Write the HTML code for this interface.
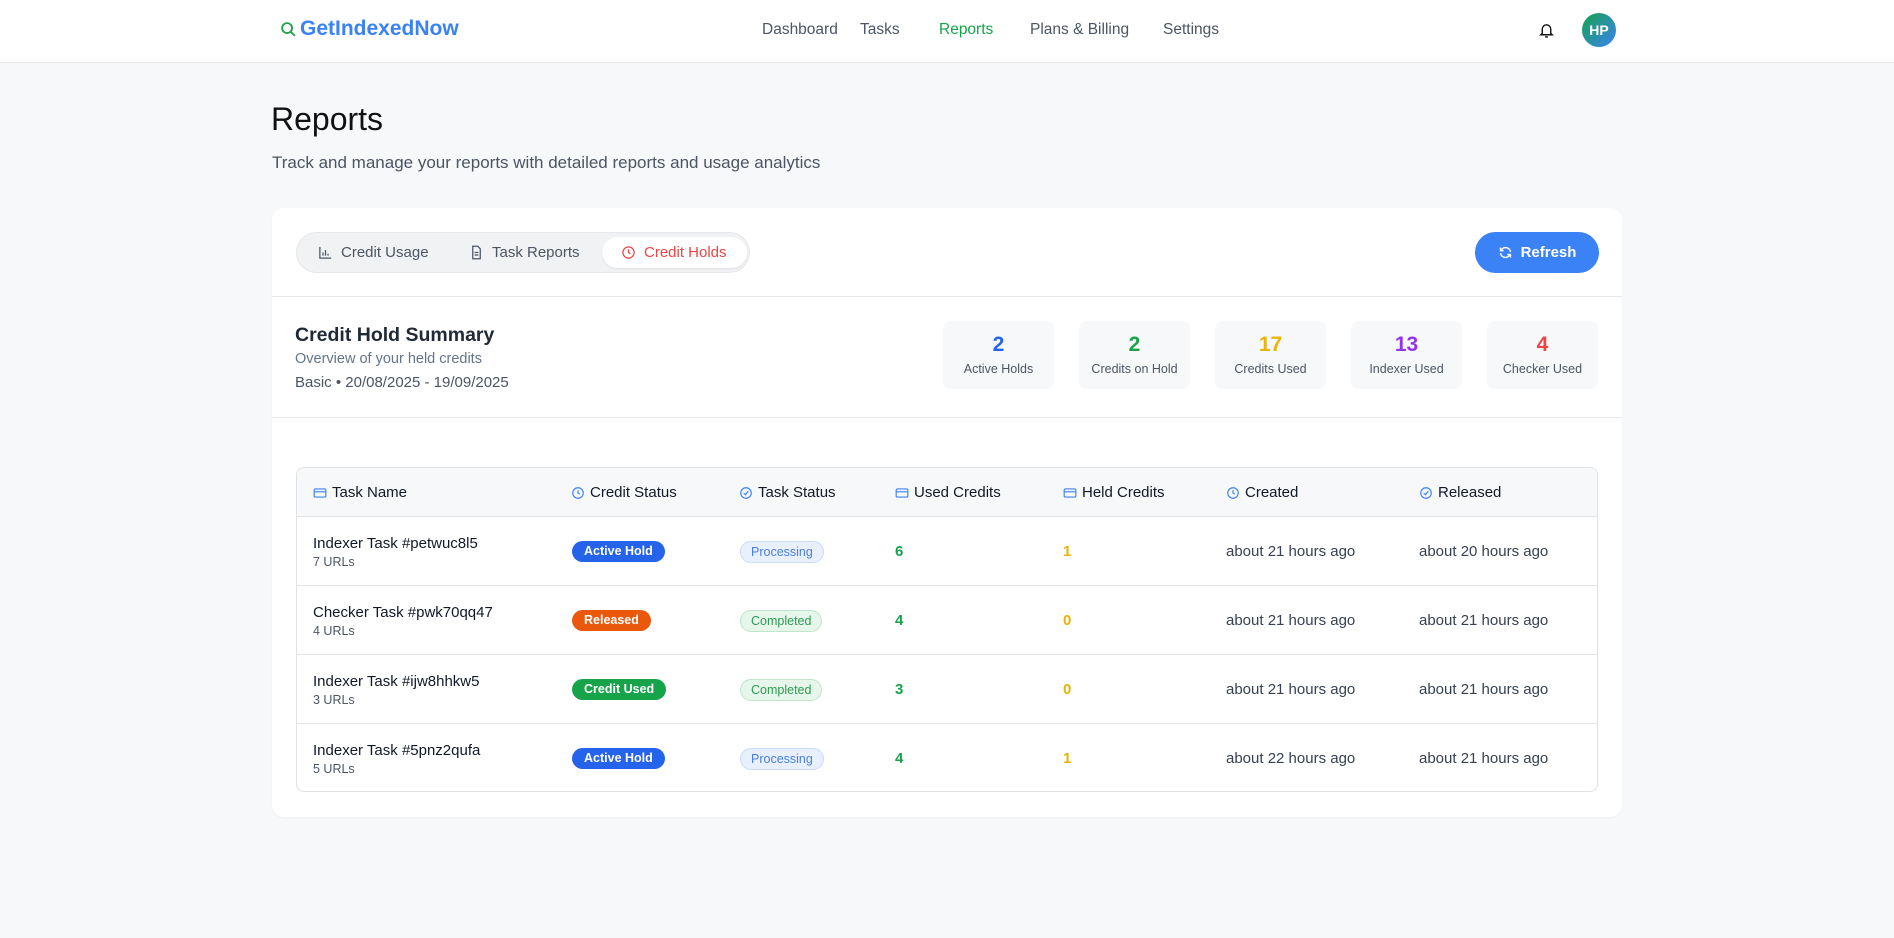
<!DOCTYPE html>
<html><head><meta charset="utf-8"><style>
*{box-sizing:border-box;margin:0;padding:0}
body{width:1894px;height:938px;background:#f7f8fa;font-family:"Liberation Sans",sans-serif;color:#111827;position:relative;overflow:hidden}
.a{position:absolute;white-space:nowrap}
.nav{position:absolute;left:0;top:0;width:1894px;height:63px;background:#fff;border-bottom:1px solid #e5e7eb}
.ni{position:absolute;top:21px;font-size:15.5px;color:#4b5563}
.card{position:absolute;left:272px;top:208px;width:1350px;height:609px;background:#fff;border-radius:12px;box-shadow:0 1px 2px rgba(0,0,0,.04)}
.stat{position:absolute;top:321px;width:111px;height:68px;background:#f7f8fa;border-radius:8px;text-align:center}
.stat b{display:block;font-size:21px;margin-top:12px}
.stat span{display:block;font-size:12.5px;color:#4b5563;margin-top:5px}
.tbl{position:absolute;left:296px;top:467px;width:1302px;height:325px;border:1px solid #dfe1e5;border-radius:8px;overflow:hidden}
.hd{position:absolute;left:0;top:0;width:100%;height:49px;background:#f7f8fa;border-bottom:1px solid #e3e5e8}
.th{position:absolute;top:16px;font-size:15px;color:#111827;display:flex;align-items:center;gap:5px}
.row{position:absolute;left:0;width:100%;height:69px;border-bottom:1px solid #e3e5e8}
.c{position:absolute;font-size:15px}
.bd{position:absolute;top:24px;height:21px;border-radius:11px;font-size:12.5px;font-weight:bold;color:#fff;padding:0 12px;line-height:21px}
.ts{position:absolute;left:443px;top:24px;height:22px;border-radius:11px;font-size:12.5px;padding:0 10px;line-height:20px;border:1px solid}
.proc{background:#e8f0fe;color:#4a7fe0;border-color:#c9dafb}
.comp{background:#e6f6ea;color:#2f9a55;border-color:#bfe5cb}
</style></head><body>
<div class="nav">
 <div class="a" style="left:280px;top:17px;font-size:21px;color:#3b82f6;font-weight:bold;display:flex;align-items:center;gap:3px">
  <svg width="17" height="17" viewBox="0 0 24 24" fill="none" stroke="#22a34a" stroke-width="2.6"><circle cx="10" cy="10" r="7"/><path d="M15 15l6 6"/></svg>GetIndexedNow</div>
 <div class="ni" style="left:762px">Dashboard</div>
 <div class="ni" style="left:860px">Tasks</div>
 <div class="ni" style="left:939px;color:#16a34a">Reports</div>
 <div class="ni" style="left:1030px">Plans &amp; Billing</div>
 <div class="ni" style="left:1163px">Settings</div>
 <svg class="a" style="left:1538px;top:22px" width="17" height="17" viewBox="0 0 24 24" fill="none" stroke="#111" stroke-width="2"><path d="M6 16V10a6 6 0 0112 0v6l2 2H4z"/><path d="M10 21h4"/></svg>
 <div class="a" style="left:1582px;top:13px;width:34px;height:34px;border-radius:50%;background:linear-gradient(135deg,#16a34a,#3b82f6);color:#fff;font-weight:bold;font-size:14px;text-align:center;line-height:34px">HP</div>
</div>
<div class="a" style="left:271px;top:101px;font-size:32px;color:#111">Reports</div>
<div class="a" style="left:272px;top:153px;font-size:17px;color:#4b5563">Track and manage your reports with detailed reports and usage analytics</div>
<div class="card"></div>
<div class="a" style="left:296px;top:232px;width:454px;height:41px;background:#f1f2f4;border-radius:21px;border:1px solid #e5e7eb"></div>
<div class="a" style="left:602px;top:237px;width:145px;height:31px;background:#fff;border-radius:16px;box-shadow:0 1px 2px rgba(0,0,0,.08)"></div>
<div class="a" style="left:318px;top:244px;font-size:15px;color:#4b5563;display:flex;align-items:center;gap:8px"><svg width="15" height="15" viewBox="0 0 24 24" fill="none" stroke="#4b5563" stroke-width="2"><path d="M3 3v18h18M8 17v-5M12 17V8M16 17v-3"/></svg>Credit Usage</div>
<div class="a" style="left:469px;top:244px;font-size:15px;color:#4b5563;display:flex;align-items:center;gap:8px"><svg width="15" height="15" viewBox="0 0 24 24" fill="none" stroke="#4b5563" stroke-width="2"><path d="M14 2H6v20h12V6z M9 12h6M9 16h6"/></svg>Task Reports</div>
<div class="a" style="left:621px;top:244px;font-size:15px;color:#ef4444;display:flex;align-items:center;gap:8px"><svg width="15" height="15" viewBox="0 0 24 24" fill="none" stroke="#ef4444" stroke-width="2"><circle cx="12" cy="12" r="9"/><path d="M12 7v5l3 2"/></svg>Credit Holds</div>
<div class="a" style="left:1475px;top:232px;width:124px;height:41px;background:#3b82f6;border-radius:21px;color:#fff;font-weight:bold;font-size:15px;display:flex;align-items:center;justify-content:center;gap:8px"><svg width="15" height="15" viewBox="0 0 24 24" fill="none" stroke="#fff" stroke-width="2.2"><path d="M20 11a8 8 0 00-14-4l-2 2M4 4v5h5M4 13a8 8 0 0014 4l2-2M20 20v-5h-5"/></svg>Refresh</div>
<div class="a" style="left:272px;top:296px;width:1350px;height:1px;background:#e5e7eb"></div>
<div class="a" style="left:295px;top:324px;font-size:19.5px;font-weight:bold;color:#1f2937">Credit Hold Summary</div>
<div class="a" style="left:295px;top:351px;font-size:14.5px;color:#64748b">Overview of your held credits</div>
<div class="a" style="left:295px;top:374px;font-size:15px;color:#4b5563">Basic • 20/08/2025 - 19/09/2025</div>
<div class="stat" style="left:943px"><b style="color:#2563eb">2</b><span>Active Holds</span></div>
<div class="stat" style="left:1079px"><b style="color:#16a34a">2</b><span>Credits on Hold</span></div>
<div class="stat" style="left:1215px"><b style="color:#eab308">17</b><span>Credits Used</span></div>
<div class="stat" style="left:1351px"><b style="color:#9333ea">13</b><span>Indexer Used</span></div>
<div class="stat" style="left:1487px"><b style="color:#ef4444">4</b><span>Checker Used</span></div>
<div class="a" style="left:272px;top:417px;width:1350px;height:1px;background:#e5e7eb"></div>
<div class="tbl">
 <div class="hd">
  <div class="th" style="left:16px"><svg width="14" height="14" viewBox="0 0 24 24" fill="none" stroke="#3b82f6" stroke-width="2"><rect x="2" y="5" width="20" height="14" rx="2"/><path d="M2 10h20"/></svg>Task Name</div>
  <div class="th" style="left:274px"><svg width="14" height="14" viewBox="0 0 24 24" fill="none" stroke="#3b82f6" stroke-width="2"><circle cx="12" cy="12" r="9"/><path d="M12 7v5l3 2"/></svg>Credit Status</div>
  <div class="th" style="left:442px"><svg width="14" height="14" viewBox="0 0 24 24" fill="none" stroke="#3b82f6" stroke-width="2"><circle cx="12" cy="12" r="9"/><path d="M8 12l3 3 5-6"/></svg>Task Status</div>
  <div class="th" style="left:598px"><svg width="14" height="14" viewBox="0 0 24 24" fill="none" stroke="#3b82f6" stroke-width="2"><rect x="2" y="5" width="20" height="14" rx="2"/><path d="M2 10h20"/></svg>Used Credits</div>
  <div class="th" style="left:766px"><svg width="14" height="14" viewBox="0 0 24 24" fill="none" stroke="#3b82f6" stroke-width="2"><rect x="2" y="5" width="20" height="14" rx="2"/><path d="M2 10h20"/></svg>Held Credits</div>
  <div class="th" style="left:929px"><svg width="14" height="14" viewBox="0 0 24 24" fill="none" stroke="#3b82f6" stroke-width="2"><circle cx="12" cy="12" r="9"/><path d="M12 7v5l3 2"/></svg>Created</div>
  <div class="th" style="left:1122px"><svg width="14" height="14" viewBox="0 0 24 24" fill="none" stroke="#3b82f6" stroke-width="2"><circle cx="12" cy="12" r="9"/><path d="M8 12l3 3 5-6"/></svg>Released</div>
 </div>
 <div class="row" style="top:49px">
  <div class="c" style="left:16px;top:18px">Indexer Task #petwuc8l5</div><div class="c" style="left:16px;top:38px;font-size:12.5px;color:#4b5563">7 URLs</div>
  <div class="bd" style="left:275px;background:#2563eb">Active Hold</div><div class="ts proc">Processing</div>
  <div class="c" style="left:598px;top:26px;color:#16a34a;font-weight:bold">6</div><div class="c" style="left:766px;top:26px;color:#eab308;font-weight:bold">1</div>
  <div class="c" style="left:929px;top:26px;color:#374151">about 21 hours ago</div><div class="c" style="left:1122px;top:26px;color:#374151">about 20 hours ago</div>
 </div>
 <div class="row" style="top:118px">
  <div class="c" style="left:16px;top:18px">Checker Task #pwk70qq47</div><div class="c" style="left:16px;top:38px;font-size:12.5px;color:#4b5563">4 URLs</div>
  <div class="bd" style="left:275px;background:#ea580c">Released</div><div class="ts comp">Completed</div>
  <div class="c" style="left:598px;top:26px;color:#16a34a;font-weight:bold">4</div><div class="c" style="left:766px;top:26px;color:#eab308;font-weight:bold">0</div>
  <div class="c" style="left:929px;top:26px;color:#374151">about 21 hours ago</div><div class="c" style="left:1122px;top:26px;color:#374151">about 21 hours ago</div>
 </div>
 <div class="row" style="top:187px">
  <div class="c" style="left:16px;top:18px">Indexer Task #ijw8hhkw5</div><div class="c" style="left:16px;top:38px;font-size:12.5px;color:#4b5563">3 URLs</div>
  <div class="bd" style="left:275px;background:#16a34a">Credit Used</div><div class="ts comp">Completed</div>
  <div class="c" style="left:598px;top:26px;color:#16a34a;font-weight:bold">3</div><div class="c" style="left:766px;top:26px;color:#eab308;font-weight:bold">0</div>
  <div class="c" style="left:929px;top:26px;color:#374151">about 21 hours ago</div><div class="c" style="left:1122px;top:26px;color:#374151">about 21 hours ago</div>
 </div>
 <div class="row" style="top:256px;border-bottom:none">
  <div class="c" style="left:16px;top:18px">Indexer Task #5pnz2qufa</div><div class="c" style="left:16px;top:38px;font-size:12.5px;color:#4b5563">5 URLs</div>
  <div class="bd" style="left:275px;background:#2563eb">Active Hold</div><div class="ts proc">Processing</div>
  <div class="c" style="left:598px;top:26px;color:#16a34a;font-weight:bold">4</div><div class="c" style="left:766px;top:26px;color:#eab308;font-weight:bold">1</div>
  <div class="c" style="left:929px;top:26px;color:#374151">about 22 hours ago</div><div class="c" style="left:1122px;top:26px;color:#374151">about 21 hours ago</div>
 </div>
</div>
</body></html>
